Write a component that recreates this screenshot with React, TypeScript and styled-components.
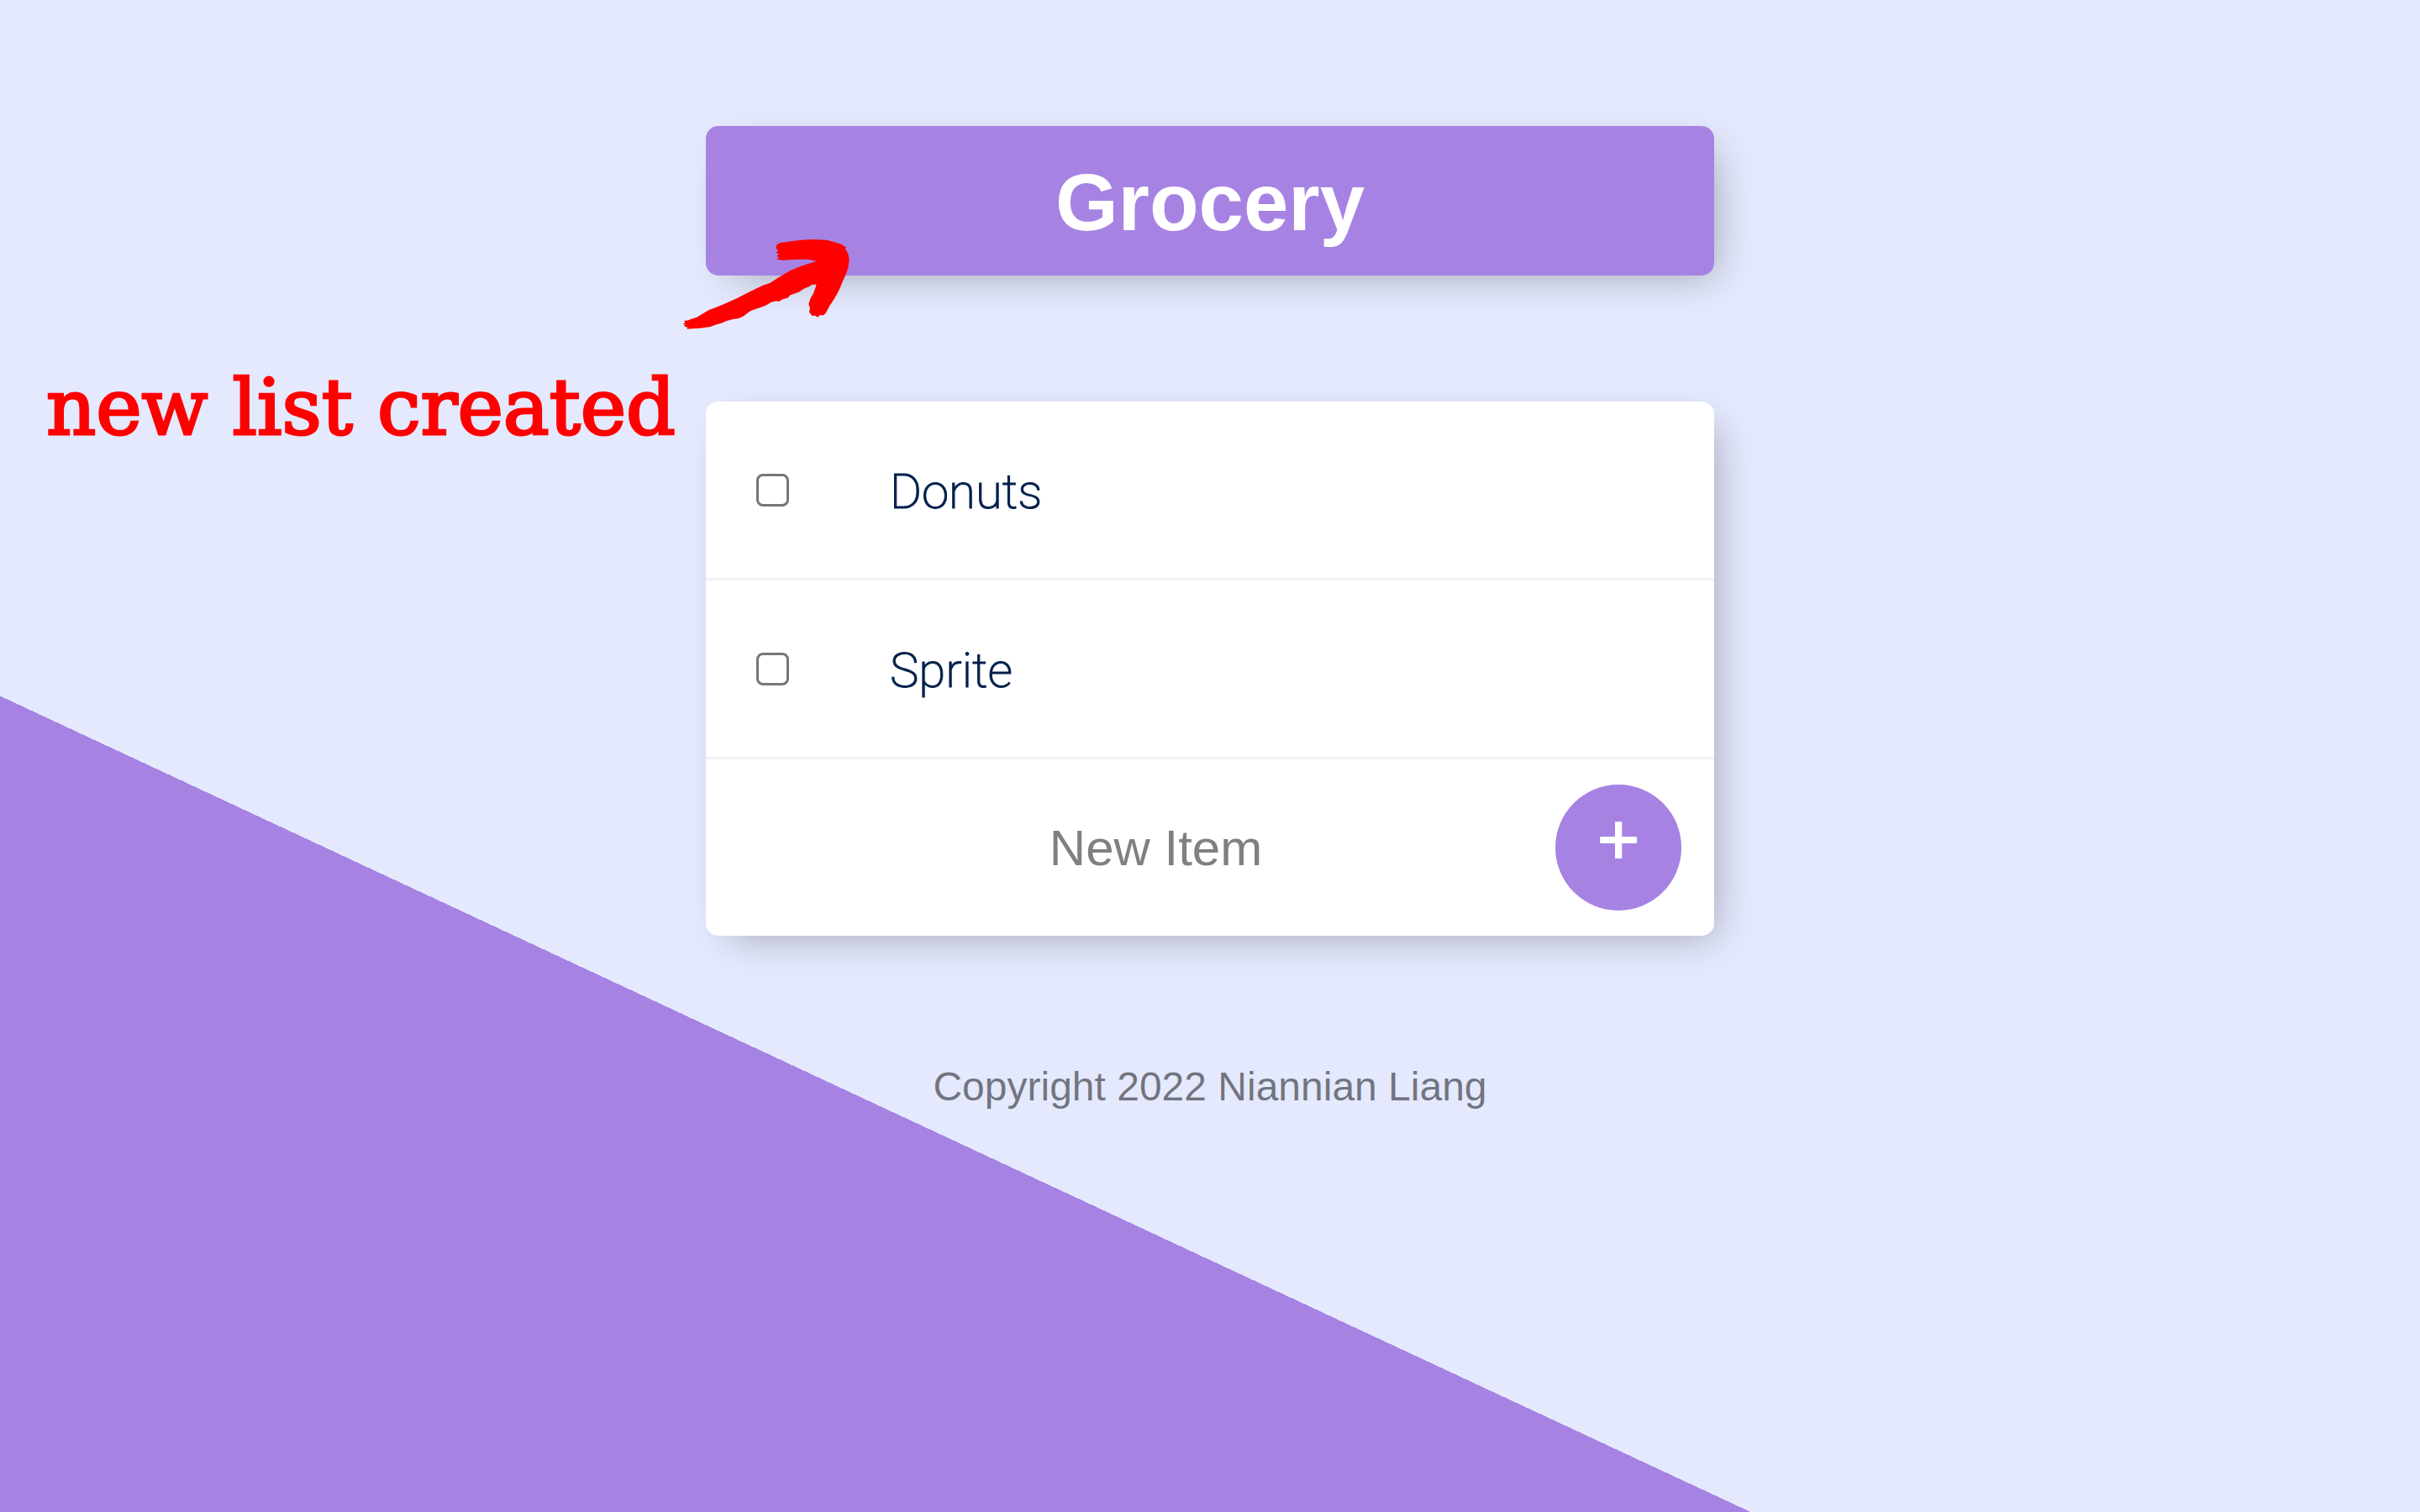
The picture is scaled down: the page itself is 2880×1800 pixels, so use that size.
import React, { useState } from "react";
import styled, { createGlobalStyle } from "styled-components";

const colors = {
  purple: "#a683e3",
  lavender: "#e4e9fd",
  navy: "#00204a",
  divider: "#f1f1f1",
  red: "#ff0000",
};

const sans = `"Helvetica Neue", "Liberation Sans", Arial, sans-serif`;

const GlobalStyle = createGlobalStyle`
  * {
    box-sizing: border-box;
  }

  body {
    margin: 0;
    background-color: ${colors.lavender};
    background-image: linear-gradient(25deg, ${colors.purple} 50%, ${colors.lavender} 50%);
    background-size: 100% 3000px;
    background-repeat: no-repeat;
    font-family: ${sans};
  }
`;

const Page = styled.div`
  display: flex;
  flex-direction: column;
  align-items: center;
  gap: 150px;
  padding: 150px 0;
`;

const Box = styled.section`
  width: 100%;
  max-width: 1200px;
  border-radius: 15px;
  background: #fff;
  box-shadow: 15px 15px 45px -15px rgba(0, 0, 0, 0.3);
`;

const HeadingBox = styled(Box)`
  position: relative;
  padding: 32px 30px 28px;
  background: ${colors.purple};
`;

const Heading = styled.h1`
  margin: 0;
  color: #fff;
  font-size: 96px;
  line-height: 118px;
  text-align: center;
`;

const Note = styled.p`
  position: absolute;
  top: 276px;
  right: calc(100% + 36px);
  margin: 0;
  color: ${colors.red};
  font-family: "DejaVu Serif", serif;
  font-size: 92px;
  line-height: 120px;
  white-space: nowrap;
  -webkit-text-stroke: 3px ${colors.red};
`;

const Arrow = styled.svg`
  position: absolute;
  top: 134px;
  left: -28px;
  width: 200px;
  height: 110px;
  fill: ${colors.red};
`;

const Row = styled.div`
  display: flex;
  align-items: center;
  min-height: 213px;
  padding: 0 60px;
  border-bottom: 3px solid ${colors.divider};
`;

const Check = styled.input`
  appearance: none;
  flex: none;
  width: 39px;
  height: 39px;
  margin: 0;
  border: 3px solid #767676;
  border-radius: 8px;
  background: #fff;

  &:checked {
    background: ${colors.purple};
  }
`;

const ItemName = styled.label<{ $done: boolean }>`
  flex: 1;
  padding: 4px 0 0 120px;
  color: ${colors.navy};
  font-family: Roboto, sans-serif;
  font-size: 58px;
  font-weight: 200;
  line-height: 72px;
  text-decoration: ${(p) => (p.$done ? "line-through" : "none")};
  -webkit-text-stroke: 1px ${colors.navy};
`;

const NewItemForm = styled.form`
  display: flex;
  align-items: center;
  gap: 6px;
  min-height: 210px;
  padding: 0 39px 0 66px;
`;

const NewItemInput = styled.input`
  flex: 1;
  min-width: 0;
  height: 180px;
  padding: 0;
  border: none;
  outline: none;
  background: transparent;
  color: ${colors.navy};
  font-family: ${sans};
  font-size: 60px;
  text-align: center;

  &::placeholder {
    color: #808080;
    opacity: 1;
  }
`;

const AddButton = styled.button`
  flex: none;
  width: 150px;
  height: 150px;
  padding: 0 0 20px;
  border: none;
  border-radius: 50%;
  background: ${colors.purple};
  color: #fff;
  font-family: ${sans};
  font-size: 86px;
  line-height: 90px;
  -webkit-text-stroke: 2px #fff;
`;

const Footer = styled.footer`
  color: rgba(0, 0, 0, 0.5);
  font-size: 48px;
  line-height: 60px;
  text-align: center;
`;

type Item = { id: string; name: string; done: boolean };

const initialItems: Item[] = [
  { id: "donuts", name: "Donuts", done: false },
  { id: "sprite", name: "Sprite", done: false },
];

function BrushArrow() {
  return (
    <Arrow viewBox="96 72 600 330" aria-hidden="true">
      <path
        d="M103 365 L122 364 L106 369 L126 360 L146 354 L190 328 L240 308 L290 286 L340 260 L382 240
        L410 230 L440 211 L480 187 L520 170 L574 153 L550 147 L520 146 L480 148 L452 150 L438 146
        L432 146 L442 139 L433 135 L441 127 L430 123 L438 116 L430 104 L434 93 L446 87 L490 81
        L520 77 L560 75 L612 77 L640 85 L664 92 L680 103 L678 109 L688 126 L692 148 L688 176
        L680 200 L670 222 L655 257 L640 285 L622 312 L608 338 L600 346 L586 346 L580 353 L570 347
        L560 348 L549 335 L552 320 L547 306 L554 284 L563 270 L570 252 L575 236 L560 236 L548 244
        L530 251 L512 263 L482 274 L472 284 L456 288 L440 297 L430 295 L412 300 L396 310
        L376 318 L366 321 L340 330 L316 348 L300 356 L274 361 L252 367 L240 373 L214 380 L196 387
        L160 392 L130 394 L112 395 L115 390 L100 383 L108 379 L98 378 L106 372 Z"
      />
    </Arrow>
  );
}

export default function App() {
  const [items, setItems] = useState(initialItems);
  const [draft, setDraft] = useState("");

  const toggle = (id: string) =>
    setItems((list) => list.map((it) => (it.id === id ? { ...it, done: !it.done } : it)));

  const add = (e: React.FormEvent) => {
    e.preventDefault();
    const name = draft.trim();
    if (!name) return;
    setItems((list) => [...list, { id: `item-${list.length}`, name, done: false }]);
    setDraft("");
  };

  return (
    <>
      <GlobalStyle />
      <Page>
        <HeadingBox>
          <Heading>Grocery</Heading>
          <BrushArrow />
          <Note>new list created</Note>
        </HeadingBox>
        <Box>
          {items.map((it) => (
            <Row key={it.id}>
              <Check id={it.id} type="checkbox" checked={it.done} onChange={() => toggle(it.id)} />
              <ItemName htmlFor={it.id} $done={it.done}>
                {it.name}
              </ItemName>
            </Row>
          ))}
          <NewItemForm onSubmit={add}>
            <NewItemInput
              type="text"
              aria-label="New Item"
              placeholder="New Item"
              autoComplete="off"
              value={draft}
              onChange={(e) => setDraft(e.target.value)}
            />
            <AddButton type="submit" aria-label="Add item">
              +
            </AddButton>
          </NewItemForm>
        </Box>
        <Footer>Copyright 2022 Niannian Liang</Footer>
      </Page>
    </>
  );
}
